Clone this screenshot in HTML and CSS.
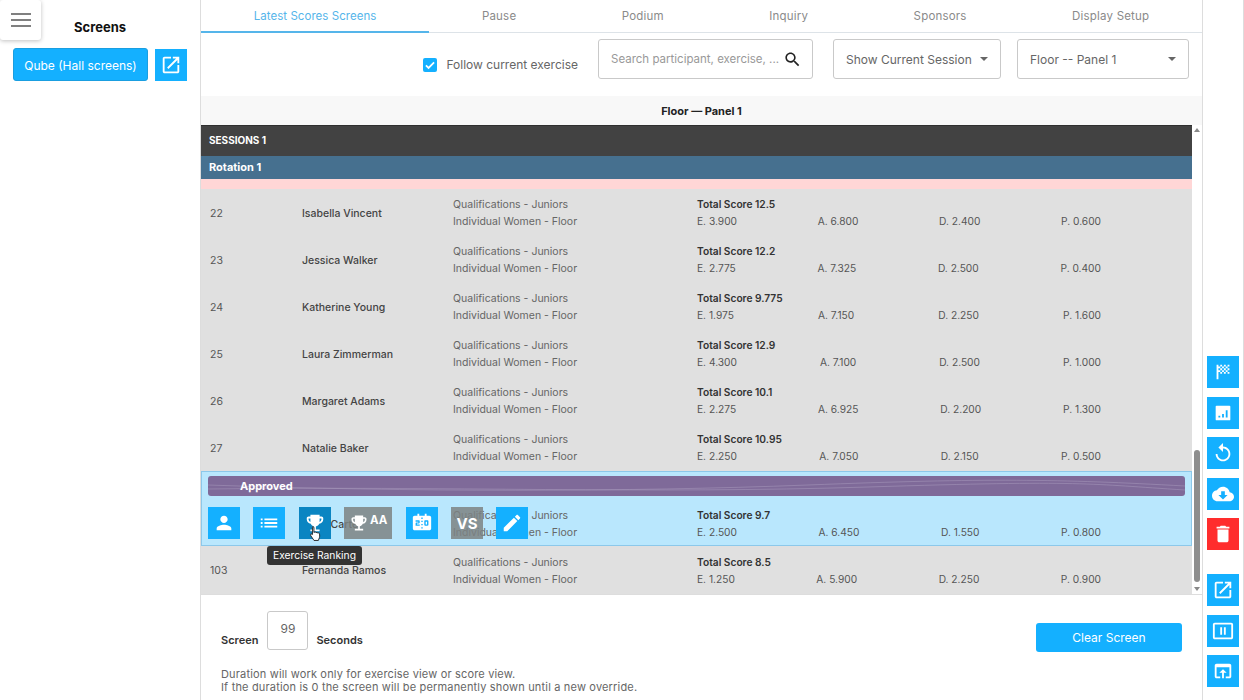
FILE: index.html
```html
<!DOCTYPE html>
<html lang="en">
<head>
  <meta charset="UTF-8">
  <meta name="viewport" content="width=device-width, initial-scale=1.0">
  <title>Screens</title>
  <link rel="stylesheet" href="styles.css">
</head>
<body>
  <svg class="defs" aria-hidden="true">
    <symbol id="i-open" viewBox="0 0 24 24"><path d="M19 19H5V5h7V3H5c-1.11 0-2 .9-2 2v14c0 1.1.89 2 2 2h14c1.1 0 2-.9 2-2v-7h-2v7zM14 3v2h3.59l-9.83 9.83 1.41 1.41L19 6.41V10h2V3h-7z"/></symbol>
    <symbol id="i-person" viewBox="0 0 24 24"><path d="M12 12c2.21 0 4-1.79 4-4s-1.79-4-4-4-4 1.79-4 4 1.79 4 4 4zm0 2c-2.67 0-8 1.34-8 4v2h16v-2c0-2.66-5.33-4-8-4z"/></symbol>
    <symbol id="i-list" viewBox="0 0 24 24"><path d="M3 13h2v-2H3v2zm0 4h2v-2H3v2zm0-8h2V7H3v2zm4 4h14v-2H7v2zm0 4h14v-2H7v2zM7 7v2h14V7H7z"/></symbol>
    <symbol id="i-trophy" viewBox="0 0 24 24"><path d="M19 5h-2V3H7v2H5c-1.1 0-2 .9-2 2v1c0 2.55 1.92 4.63 4.39 4.94.63 1.5 1.98 2.63 3.61 2.96V19H7v2h10v-2h-4v-3.1c1.63-.33 2.98-1.46 3.61-2.96C19.08 12.63 21 10.55 21 8V7c0-1.1-.9-2-2-2zM5 8V7h2v3.82C5.84 10.4 5 9.3 5 8zm14 0c0 1.3-.84 2.4-2 2.82V7h2v1z"/></symbol>
    <symbol id="i-board" viewBox="0 0 24 24"><path d="M17.5 13.5H16v-3h1.5v3zM20 4h-3V2h-2v2H9V2H7v2H4c-1.1 0-2 .9-2 2v12c0 1.1.9 2 2 2h16c1.1 0 2-.9 2-2V6c0-1.1-.9-2-2-2zM9.5 11.5c0 .55-.45 1-1 1h-2v1h3V15H5v-2.5c0-.55.45-1 1-1h2v-1H5V9h3.5c.55 0 1 .45 1 1v1.5zm3.25 6.5h-1.5v-1.5h1.5V18zm0-3.5h-1.5V13h1.5v1.5zm0-3.5h-1.5V9.5h1.5V11zm0-3.5h-1.5V6h1.5v1.5zM19 14c0 .55-.45 1-1 1h-2.5c-.55 0-1-.45-1-1v-4c0-.55.45-1 1-1H18c.55 0 1 .45 1 1v4z"/></symbol>
    <symbol id="i-edit" viewBox="0 0 24 24"><path d="M3 17.25V21h3.75L17.81 9.94l-3.75-3.75L3 17.25zM20.71 7.04c.39-.39.39-1.02 0-1.41l-2.34-2.34c-.39-.39-1.02-.39-1.41 0l-1.83 1.83 3.75 3.75 1.83-1.83z"/></symbol>
  </svg>

  <div class="app">
    <aside class="sidebar">
      <button class="menu-btn" aria-label="Menu"><span></span><span></span><span></span></button>
      <h2>Screens</h2>
      <div class="screen-row">
        <button class="btn-primary qube">Qube (Hall screens)</button>
        <button class="icon-btn"><svg><use href="#i-open"/></svg></button>
      </div>
    </aside>

    <main class="main">
      <nav class="tabs">
        <a class="tab active">Latest Scores Screens</a>
        <a class="tab">Pause</a>
        <a class="tab">Podium</a>
        <a class="tab">Inquiry</a>
        <a class="tab">Sponsors</a>
        <a class="tab">Display Setup</a>
      </nav>

      <div class="toolbar">
        <label class="follow">
          <span class="check"><svg viewBox="0 0 24 24"><path d="M5 12.5l4.5 4.5L19 7.5" fill="none" stroke="#fff" stroke-width="3"/></svg></span>
          Follow current exercise
        </label>
        <div class="field search">
          <span class="placeholder">Search participant, exercise, ...</span>
          <svg viewBox="0 0 24 24"><path d="M15.5 14h-.79l-.28-.27C15.41 12.59 16 11.11 16 9.5 16 5.91 13.09 3 9.5 3S3 5.91 3 9.5 5.91 16 9.5 16c1.61 0 3.09-.59 4.23-1.57l.27.28v.79l5 4.99L20.49 19l-4.99-5zm-6 0C7.01 14 5 11.99 5 9.5S7.01 5 9.5 5 14 7.01 14 9.5 11.99 14 9.5 14z"/></svg>
        </div>
        <div class="field select session">Show Current Session<i class="caret"></i></div>
        <div class="field select panel">Floor -- Panel 1<i class="caret"></i></div>
      </div>

      <div class="panel-title">Floor — Panel 1</div>

      <div class="scores">
        <div class="table">
          <div class="session-head">SESSIONS 1</div>
          <div class="rotation-head">Rotation 1</div>
          <div class="pink-strip"></div>

          <div class="row">
            <div>22</div><div class="name">Isabella Vincent</div>
            <div class="exercise">Qualifications - Juniors<br>Individual Women - Floor</div>
            <div><b>Total Score 12.5</b><div class="parts"><span>E. 3.900</span><span>A. 6.800</span><span>D. 2.400</span><span>P. 0.600</span></div></div>
          </div>
          <div class="row">
            <div>23</div><div class="name">Jessica Walker</div>
            <div class="exercise">Qualifications - Juniors<br>Individual Women - Floor</div>
            <div><b>Total Score 12.2</b><div class="parts"><span>E. 2.775</span><span>A. 7.325</span><span>D. 2.500</span><span>P. 0.400</span></div></div>
          </div>
          <div class="row">
            <div>24</div><div class="name">Katherine Young</div>
            <div class="exercise">Qualifications - Juniors<br>Individual Women - Floor</div>
            <div><b>Total Score 9.775</b><div class="parts"><span>E. 1.975</span><span>A. 7.150</span><span>D. 2.250</span><span>P. 1.600</span></div></div>
          </div>
          <div class="row">
            <div>25</div><div class="name">Laura Zimmerman</div>
            <div class="exercise">Qualifications - Juniors<br>Individual Women - Floor</div>
            <div><b>Total Score 12.9</b><div class="parts"><span>E. 4.300</span><span>A. 7.100</span><span>D. 2.500</span><span>P. 1.000</span></div></div>
          </div>
          <div class="row">
            <div>26</div><div class="name">Margaret Adams</div>
            <div class="exercise">Qualifications - Juniors<br>Individual Women - Floor</div>
            <div><b>Total Score 10.1</b><div class="parts"><span>E. 2.275</span><span>A. 6.925</span><span>D. 2.200</span><span>P. 1.300</span></div></div>
          </div>
          <div class="row">
            <div>27</div><div class="name">Natalie Baker</div>
            <div class="exercise">Qualifications - Juniors<br>Individual Women - Floor</div>
            <div><b>Total Score 10.95</b><div class="parts"><span>E. 2.250</span><span>A. 7.050</span><span>D. 2.150</span><span>P. 0.500</span></div></div>
          </div>

          <div class="approved-wrap">
            <div class="approved-bar">
              <svg viewBox="0 0 977 20" preserveAspectRatio="none"><path d="M0 9C200 16 420 16 600 9S850 3 977 10M0 13C240 10 440 18 660 11S880 8 977 14" fill="none" stroke="#a99bbd" stroke-opacity="0.5"/></svg>
              <span>Approved</span>
            </div>
            <div class="row approved">
              <div>101</div><div class="name">Sofia Carter</div>
              <div class="exercise">Qualifications - Juniors<br>Individual Women - Floor</div>
              <div><b>Total Score 9.7</b><div class="parts"><span>E. 2.500</span><span>A. 6.450</span><span>D. 1.550</span><span>P. 0.800</span></div></div>
            </div>
            <div class="actions">
              <button class="icon-btn"><svg><use href="#i-person"/></svg></button>
              <button class="icon-btn"><svg><use href="#i-list"/></svg></button>
              <button class="icon-btn hover"><svg><use href="#i-trophy"/></svg></button>
              <button class="icon-btn grey wide"><svg><use href="#i-trophy"/></svg><em>AA</em></button>
              <button class="icon-btn"><svg><use href="#i-board"/></svg></button>
              <button class="icon-btn grey vs">VS</button>
              <button class="icon-btn"><svg><use href="#i-edit"/></svg></button>
            </div>
            <div class="tooltip">Exercise Ranking</div>
            <svg class="hand" viewBox="0 0 14 18"><path d="M4 1.5c.8 0 1.3.6 1.3 1.4v5l.7-.3c.8-.3 1.4 0 1.6.4.8-.4 1.5-.2 1.8.4.8-.3 1.6.1 1.8.8.5 1.7.4 3.7-.4 5.3l-.7 2H5.4L2 11.5c-.5-.7-.5-1.4 0-1.8.5-.3 1.1-.2 1.7.4V2.900c0-.8 0-1.400.3-1.400z" fill="#fff" stroke="#222"/></svg>
          </div>

          <div class="row last">
            <div>103</div><div class="name">Fernanda Ramos</div>
            <div class="exercise">Qualifications - Juniors<br>Individual Women - Floor</div>
            <div><b>Total Score 8.5</b><div class="parts"><span>E. 1.250</span><span>A. 5.900</span><span>D. 2.250</span><span>P. 0.900</span></div></div>
          </div>
        </div>
        <div class="scrollbar">
          <i class="arrow up"></i>
          <div class="track"><div class="thumb"></div></div>
          <i class="arrow down"></i>
        </div>
      </div>

      <footer class="footer">
        <div class="duration">
          <b>Screen</b>
          <div class="seconds">99</div>
          <b>Seconds</b>
          <button class="btn-primary clear">Clear Screen</button>
        </div>
        <p>Duration will work only for exercise view or score view.<br>If the duration is 0 the screen will be permanently shown until a new override.</p>
      </footer>
    </main>

    <aside class="rail">
      <div class="rail-group">
        <button class="icon-btn"><svg viewBox="0 0 24 24"><path d="M11,6H9V4h2V6z M15,4h-2v2h2V4z M9,14h2v-2H9V14z M19,10V8h-2v2H19z M19,14v-2h-2v2H19z M13,14h2v-2h-2V14z M19,4h-2v2h2V4z M13,8V6h-2v2H13z M7,10V8h2V6H7V4H5v16h2v-8h2v-2H7z M15,12h2v-2h-2V12z M11,10v2h2v-2H11z M9,8v2h2V8H9z M13,10h2V8h-2V10z M15,6v2h2V6H15z"/></svg></button>
        <button class="icon-btn"><svg viewBox="0 0 24 24"><path fill-rule="evenodd" d="M19 4H5a1 1 0 0 0-1 1v14a1 1 0 0 0 1 1h14a1 1 0 0 0 1-1V5a1 1 0 0 0-1-1zM9 17H7v-2h2zm4 0h-2v-4h2zm4 0h-2V9h2z"/></svg></button>
        <button class="icon-btn"><svg viewBox="0 0 24 24"><path d="M12 5V1L7 6l5 5V7c3.31 0 6 2.69 6 6s-2.69 6-6 6-6-2.69-6-6H4c0 4.42 3.58 8 8 8s8-3.58 8-8-3.58-8-8-8z"/></svg></button>
        <button class="icon-btn"><svg viewBox="0 0 24 24"><path d="M19.35 10.04C18.67 6.59 15.64 4 12 4 9.11 4 6.6 5.64 5.35 8.04 2.34 8.36 0 10.91 0 14c0 3.31 2.69 6 6 6h13c2.76 0 5-2.24 5-5 0-2.64-2.05-4.78-4.65-4.96zM17 13l-5 5-5-5h3V9h4v4h3z"/></svg></button>
        <button class="icon-btn red"><svg viewBox="0 0 24 24"><path d="M6 19c0 1.1.9 2 2 2h8c1.1 0 2-.9 2-2V7H6v12zM19 4h-3.5l-1-1h-5l-1 1H5v2h14V4z"/></svg></button>
      </div>
      <div class="rail-group">
        <button class="icon-btn"><svg><use href="#i-open"/></svg></button>
        <button class="icon-btn"><svg viewBox="0 0 24 24"><path d="M21 19.1H3V5h18v14.1zM21 3H3c-1.1 0-2 .9-2 2v14c0 1.1.9 2 2 2h18c1.1 0 2-.9 2-2V5c0-1.1-.9-2-2-2zM9 8h2v8H9zm4 0h2v8h-2z"/></svg></button>
        <button class="icon-btn"><svg viewBox="0 0 24 24"><path d="M19 4H5c-1.11 0-2 .9-2 2v12c0 1.1.89 2 2 2h4v-2H5V8h14v10h-4v2h4c1.1 0 2-.9 2-2V6c0-1.1-.89-2-2-2zm-7 6l-4 4h3v6h2v-6h3l-4-4z"/></svg></button>
      </div>
    </aside>
  </div>
</body>
</html>
```

FILE: styles.css
```css
* {
  box-sizing: border-box;
}

body {
  margin: 0;
  height: 700px;
  overflow: hidden;
  font-family: 'Inter', 'Liberation Sans', sans-serif;
  font-size: 11px;
  color: #555;
  background: #fff;
}

button {
  font-family: inherit;
  border: none;
  padding: 0;
  cursor: pointer;
}

.defs {
  display: none;
}

.app {
  display: flex;
  height: 700px;
}

/* Sidebar */
.sidebar {
  position: relative;
  width: 201px;
  flex: none;
  border-right: 1px solid #ddd;
}

.sidebar h2 {
  margin: 0;
  padding: 20px 0 0 0;
  height: 48px;
  font-size: 13px;
  line-height: 15px;
  font-weight: 700;
  color: #111;
  text-align: center;
}

.menu-btn {
  position: absolute;
  left: 0;
  top: 0;
  width: 41px;
  height: 40px;
  background: #fff;
  border-radius: 3px;
  box-shadow: 0 1px 4px rgba(0, 0, 0, 0.25);
  display: flex;
  flex-direction: column;
  align-items: center;
  justify-content: center;
  gap: 4px;
}

.menu-btn span {
  display: block;
  width: 20px;
  height: 2px;
  background: #808080;
}

.screen-row {
  display: flex;
  gap: 7px;
  padding-left: 13px;
  align-items: center;
}

.btn-primary {
  background: #14b0ff;
  color: #fff;
  border-radius: 3px;
}

.qube {
  width: 135px;
  height: 33px;
  padding-top: 1px;
  font-size: 12px;
  border: 1px solid #1a9ee0;
}

.icon-btn {
  width: 32px;
  height: 32px;
  flex: none;
  background: #14b0ff;
  color: #fff;
  display: flex;
  align-items: center;
  justify-content: center;
}

.icon-btn svg {
  width: 22px;
  height: 22px;
  fill: currentColor;
}

/* Main column */
.main {
  flex: 1;
  min-width: 0;
  display: flex;
  flex-direction: column;
}

.tabs {
  display: flex;
  height: 33px;
  border-bottom: 1px solid #dde3e8;
}

.tab {
  flex: 1 1 auto;
  padding: 0 46px;
  line-height: 32px;
  text-align: center;
  font-size: 11.5px;
  letter-spacing: 0.2px;
  color: #8a8a8a;
}

.tab.active {
  color: #55b5ea;
  letter-spacing: 0.05px;
  border-bottom: 2px solid #55b5ea;
  height: 33px;
}

.toolbar {
  height: 63px;
  padding: 6px 13px 0 0;
  display: flex;
  justify-content: flex-end;
  align-items: flex-start;
  font-size: 12px;
  color: #666;
}

.follow {
  display: flex;
  align-items: center;
  gap: 9px;
  margin: 18px 20px 0 0;
}

.check {
  width: 14px;
  height: 14px;
  background: #14b0ff;
  border-radius: 2px;
  display: flex;
}

.field {
  height: 40px;
  border: 1px solid #c9c9c9;
  border-radius: 3px;
  display: flex;
  align-items: center;
}

.search {
  width: 215px;
  padding: 0 10px 0 12px;
  justify-content: space-between;
  margin-right: 20px;
  font-size: 11.5px;
}

.search .placeholder {
  color: #999;
  white-space: nowrap;
}

.search svg {
  width: 19px;
  height: 19px;
  flex: none;
  fill: #222;
}

.select {
  padding: 0 12px;
  justify-content: space-between;
}

.session {
  width: 168px;
  margin-right: 16px;
}

.panel {
  width: 172px;
}

.caret {
  width: 0;
  height: 0;
  border-left: 4px solid transparent;
  border-right: 4px solid transparent;
  border-top: 4px solid #666;
}

.panel-title {
  height: 29px;
  line-height: 30px;
  background: #f8f8f8;
  text-align: center;
  font-weight: 700;
  color: #222;
}

/* Scores table */
.scores {
  height: 470px;
  display: flex;
  overflow: hidden;
  border-bottom: 1px solid #ddd;
}

.table {
  width: 991px;
  flex: none;
  background: #e0e0e0;
}

.session-head {
  height: 31px;
  line-height: 28px;
  padding-left: 8px;
  background: #424242;
  border-top: 1px solid #2f2f2f;
  color: #fff;
  font-size: 10px;
  font-weight: 700;
}

.rotation-head {
  height: 23px;
  line-height: 23px;
  padding-left: 8px;
  background: #46708f;
  color: #fff;
  font-weight: 700;
}

.pink-strip {
  height: 10px;
  background: #ffd6d6;
}

.row {
  display: grid;
  grid-template-columns: 92px 151px 244px 404px;
  height: 47px;
  padding: 1px 0 0 9px;
  line-height: 17px;
  font-size: 10.5px;
  align-items: center;
}

.row b {
  color: #333;
  font-size: 10.2px;
  font-weight: 600;
}

.name {
  color: #444;
  font-weight: 500;
}

.exercise {
  color: #666;
}

.parts {
  display: flex;
  justify-content: space-between;
  font-size: 10.2px;
  color: #555;
}

.approved-wrap {
  position: relative;
  height: 75px;
  padding: 4px 6px 0 6px;
  background: #b9e7fd;
  border: 1px solid #8cc8ea;
}

.approved-bar {
  position: relative;
  height: 20px;
  line-height: 20px;
  padding-left: 32px;
  background: #7f6a99;
  border-radius: 3px;
  color: #fff;
  font-weight: 700;
}

.approved-bar svg {
  position: absolute;
  left: 0;
  top: 0;
  width: 100%;
  height: 100%;
}

.approved-bar span {
  position: relative;
}

.row.approved {
  margin: 0 -6px;
  height: 50px;
  padding: 6px 0 0 8px;
}

.actions {
  position: absolute;
  left: 6px;
  top: 35px;
  display: flex;
  gap: 13.4px;
}

.icon-btn.hover {
  background: #0a85c2;
}

.icon-btn.grey {
  background: rgba(125, 130, 130, 0.85);
}

.icon-btn.wide {
  width: 48px;
  align-items: center;
}

.icon-btn.wide svg {
  width: 20px;
  height: 20px;
}

.icon-btn.wide em {
  font-style: normal;
  font-weight: 700;
  font-size: 11.5px;
  margin: -6px 0 0 1px;
}

.icon-btn.vs {
  font-size: 15px;
  font-weight: 700;
}

.tooltip {
  position: absolute;
  left: 65px;
  top: 74px;
  z-index: 2;
  height: 19px;
  line-height: 19px;
  padding: 0 6px;
  background: #333;
  border-radius: 3px;
  color: #fff;
  font-size: 10.3px;
  white-space: nowrap;
}

.hand {
  position: absolute;
  left: 107px;
  top: 53px;
  width: 13px;
  height: 17px;
  z-index: 3;
}

.row.last {
  height: 49px;
  padding-top: 0;
}

.scrollbar {
  width: 10px;
  flex: none;
  display: flex;
  flex-direction: column;
  align-items: center;
  background: #fff;
}

.arrow {
  width: 0;
  height: 0;
  border-left: 3px solid transparent;
  border-right: 3px solid transparent;
}

.arrow.up {
  border-bottom: 4px solid #888;
  margin-top: 3px;
}

.arrow.down {
  border-top: 4px solid #888;
  margin-bottom: 3px;
}

.track {
  flex: 1;
  width: 100%;
  display: flex;
  flex-direction: column;
  justify-content: flex-end;
  align-items: center;
  padding-bottom: 5px;
}

.thumb {
  width: 6px;
  height: 132px;
  background: #8e8e8e;
  border-radius: 3px;
}

.footer {
  flex: 1;
  padding: 16px 20px 0 20px;
}

.duration {
  display: flex;
  align-items: flex-end;
  height: 41px;
  gap: 8px;
}

.duration b {
  color: #333;
  font-weight: 600;
  font-size: 11px;
  line-height: 16px;
  margin-bottom: 4px;
}

.seconds {
  width: 41px;
  height: 39px;
  margin-left: 1px;
  padding-top: 9px;
  border: 1px solid #c9c9c9;
  border-radius: 3px;
  text-align: center;
  font-size: 12px;
  color: #666;
  align-self: flex-start;
}

.clear {
  width: 146px;
  height: 29px;
  margin-left: auto;
  font-size: 12px;
}

.footer p {
  margin: 16px 0 0;
  line-height: 13px;
  font-size: 11px;
  letter-spacing: 0.17px;
  color: #666;
}

/* Right rail */
.rail {
  width: 42px;
  flex: none;
  padding: 0 4px 13px 4px;
  border-left: 1px solid #ddd;
  border-right: 1px solid #ddd;
  display: flex;
  flex-direction: column;
  justify-content: flex-end;
  gap: 24px;
}

.rail-group {
  display: flex;
  flex-direction: column;
  gap: 8.5px;
}

.icon-btn.red {
  background: #ff2d2d;
}
```
